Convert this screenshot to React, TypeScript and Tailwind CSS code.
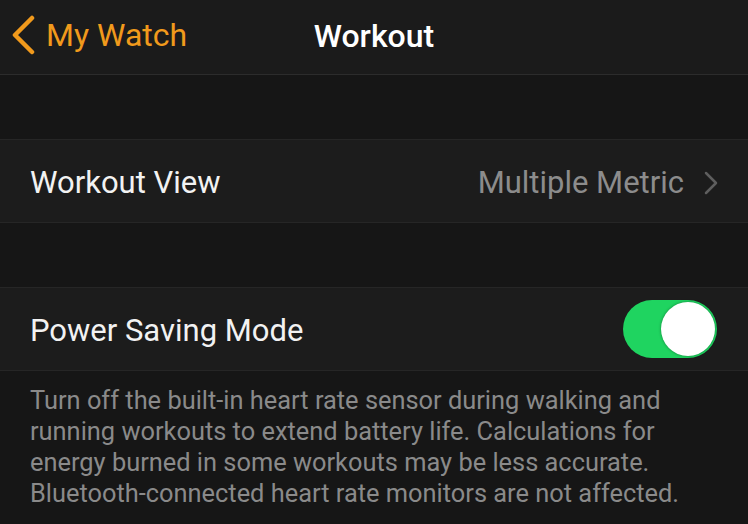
export default function App() {
  const font = { fontFamily: 'Roboto, "Noto Sans", sans-serif' };

  return (
    <div className="flex h-[524px] w-[748px] flex-col overflow-hidden bg-[#161616] text-white" style={font}>
      {/* nav bar */}
      <div className="relative flex h-[75px] shrink-0 items-center border-b border-[#2c2c2c] bg-[#1b1b1b] pb-[4px]">
        <div className="flex items-center pl-[9px] text-[#f19a1c]">
          <svg width="28" height="40" viewBox="0 0 28 40" fill="none">
            <path d="M23 3 L6 20 L23 37" stroke="#f19a1c" strokeWidth="4.5" strokeLinecap="round" strokeLinejoin="round" />
          </svg>
          <span className="ml-[9px] text-[32px] leading-none">My Watch</span>
        </div>
        <div className="pointer-events-none absolute left-0 right-0 top-0 flex h-[71px] items-center justify-center">
          <span className="text-[32px] font-medium leading-none">Workout</span>
        </div>
      </div>

      <div className="h-[64px] shrink-0" />

      {/* workout view row */}
      <div className="flex h-[84px] shrink-0 items-center border-y border-[#262626] bg-[#1c1c1c] pl-[30px] pr-[30px] pt-[3px]">
        <span className="text-[31px] leading-none text-[#f2f2f2]">Workout View</span>
        <span className="ml-auto text-[31px] leading-none text-[#8c8c8c]">Multiple Metric</span>
        <svg className="ml-[20px]" width="14" height="24" viewBox="0 0 14 24" fill="none">
          <path d="M2 2 L12 12 L2 22" stroke="#5e5e5e" strokeWidth="2.5" strokeLinecap="round" strokeLinejoin="round" />
        </svg>
      </div>

      <div className="h-[64px] shrink-0" />

      {/* power saving row */}
      <div className="flex h-[84px] shrink-0 items-center border-y border-[#262626] bg-[#1c1c1c] pl-[30px] pr-[31px]">
        <span className="pt-[3px] text-[31px] leading-none text-[#f2f2f2]">Power Saving Mode</span>
        <div className="ml-auto flex h-[58px] w-[94px] items-center justify-end rounded-full bg-[#1fd460] p-[2px]">
          <div className="h-[54px] w-[54px] rounded-full bg-white shadow-[0_0_3px_rgba(0,0,0,0.4)]" />
        </div>
      </div>

      {/* footer */}
      <p className="pl-[30px] pr-[10px] pt-[14px] text-[25.4px] leading-[31px] text-[#8a8a8a]">
        Turn off the built-in heart rate sensor during walking and
        <br />
        running workouts to extend battery life. Calculations for
        <br />
        energy burned in some workouts may be less accurate.
        <br />
        Bluetooth-connected heart rate monitors are not affected.
      </p>
    </div>
  );
}
